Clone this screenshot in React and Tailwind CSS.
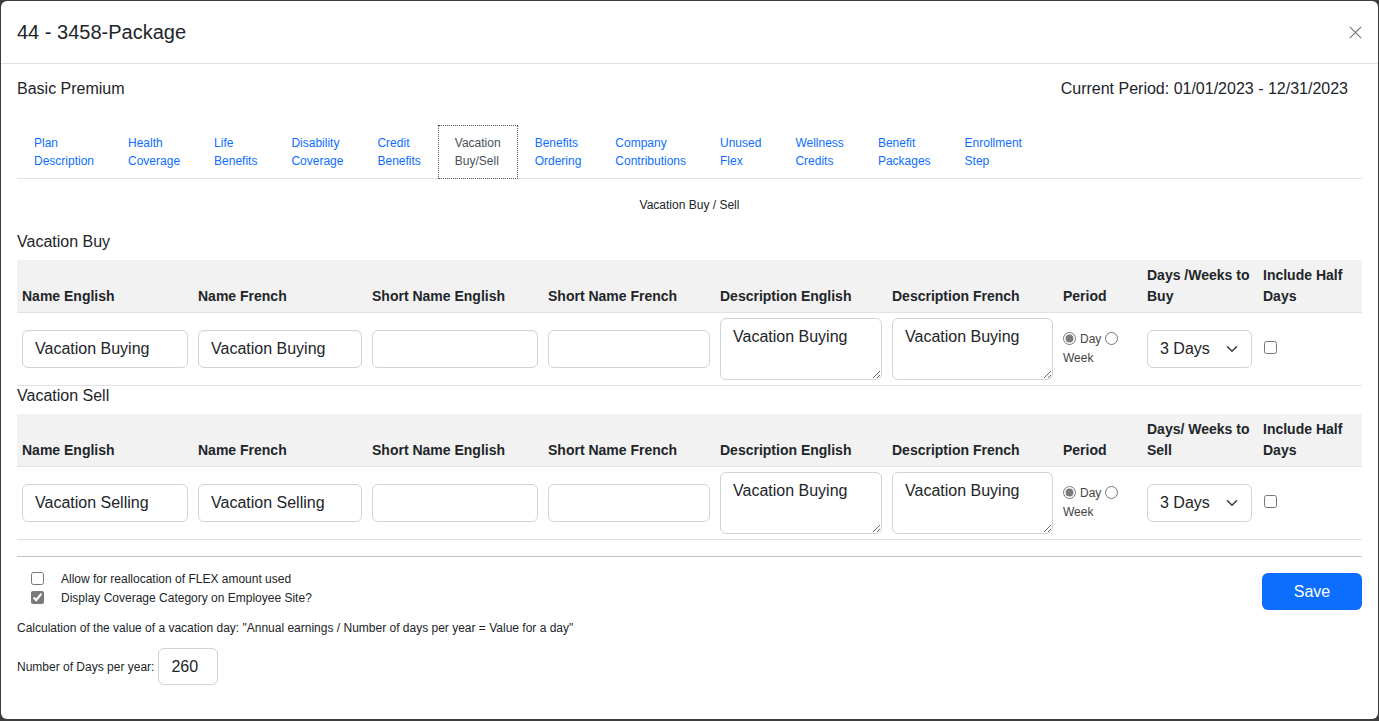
import React from "react";

const tabs = [
  ["Plan", "Description"],
  ["Health", "Coverage"],
  ["Life", "Benefits"],
  ["Disability", "Coverage"],
  ["Credit", "Benefits"],
  ["Vacation", "Buy/Sell"],
  ["Benefits", "Ordering"],
  ["Company", "Contributions"],
  ["Unused", "Flex"],
  ["Wellness", "Credits"],
  ["Benefit", "Packages"],
  ["Enrollment", "Step"],
];

const Chevron = () => (
  <svg width="12" height="12" viewBox="0 0 16 16" className="absolute right-[14px] top-1/2 -translate-y-1/2 pointer-events-none">
    <path d="M2 5l6 6 6-6" fill="none" stroke="#343a40" strokeWidth="2" strokeLinecap="round" strokeLinejoin="round" />
  </svg>
);

const inputCls =
  "w-full h-[38px] border border-[#ced4da] rounded-[6px] px-3 text-base text-[#212529] bg-white outline-none";
const areaCls =
  "block w-full h-[62px] border border-[#ced4da] rounded-[6px] px-3 py-1.5 text-base leading-6 text-[#212529] bg-white outline-none";

const VacationTable = ({ name, desc, daysLabel, group }) => (
  <table className="w-full border-collapse table-fixed">
    <colgroup>
      <col className="w-[176px]" />
      <col className="w-[174px]" />
      <col className="w-[176px]" />
      <col className="w-[172px]" />
      <col className="w-[172px]" />
      <col className="w-[171px]" />
      <col className="w-[84px]" />
      <col className="w-[116px]" />
      <col className="w-[104px]" />
    </colgroup>
    <thead>
      <tr className="bg-[#f2f2f2] border-b border-[#dee2e6]">
        {[
          "Name English",
          "Name French",
          "Short Name English",
          "Short Name French",
          "Description English",
          "Description French",
          "Period",
          daysLabel,
          "Include Half Days",
        ].map((h) => (
          <th key={h} className="text-left align-bottom px-[5px] py-[5px] text-sm leading-[21px] font-bold text-[#212529]">
            {h}
          </th>
        ))}
      </tr>
    </thead>
    <tbody>
      <tr className="border-b border-[#dee2e6]">
        <td className="p-[5px] align-middle">
          <input className={inputCls} defaultValue={name} />
        </td>
        <td className="p-[5px] align-middle">
          <input className={inputCls} defaultValue={name} />
        </td>
        <td className="p-[5px] align-middle">
          <input className={inputCls} />
        </td>
        <td className="p-[5px] align-middle">
          <input className={inputCls} />
        </td>
        <td className="p-[5px] align-middle">
          <textarea className={areaCls} defaultValue={desc} />
        </td>
        <td className="p-[5px] align-middle">
          <textarea className={areaCls} defaultValue={desc} />
        </td>
        <td className="p-[5px] align-middle text-xs leading-[19px] text-[#444]">
          <input type="radio" name={group} defaultChecked className="m-0 mr-1 align-[-2px] accent-[#7a7a7a]" />
          Day
          <input type="radio" name={group} className="m-0 ml-1 align-[-2px] accent-[#7a7a7a]" /> Week
        </td>
        <td className="p-[5px] align-middle">
          <div className="relative w-[105px]">
            <select className="appearance-none w-full h-[38px] border border-[#ced4da] rounded-[6px] pl-3 text-base text-[#212529] bg-white outline-none">
              <option>3 Days</option>
            </select>
            <Chevron />
          </div>
        </td>
        <td className="p-[5px] align-middle">
          <input type="checkbox" className="m-0 ml-px mb-[5px] w-[13px] h-[13px] align-middle" />
        </td>
      </tr>
    </tbody>
  </table>
);

export default function App() {
  return (
    <div className="min-h-screen bg-[#3d3d3d] pt-px pl-px font-['Liberation_Sans',Arial,sans-serif] text-[#212529]">
      <div className="w-[1377px] h-[718px] bg-white rounded-[6px] overflow-hidden">
        {/* header */}
        <div className="flex items-center justify-between px-4 h-[63px] border-b border-[#dee2e6]">
          <h1 className="text-xl leading-[30px]">44 - 3458-Package</h1>
          <svg width="13" height="13" viewBox="0 0 16 16">
            <path d="M1 1l14 14M15 1L1 15" stroke="#6c757d" strokeWidth="1.4" />
          </svg>
        </div>

        <div className="px-4">
          <div className="flex justify-between pt-[13px] text-base leading-6">
            <span>Basic Premium</span>
            <span className="pr-[14px]">Current Period: 01/01/2023 - 12/31/2023</span>
          </div>

          {/* tabs */}
          <div className="flex mt-6 border-b border-[#dee2e6]">
            {tabs.map(([a, b]) => {
              const active = a === "Vacation";
              return (
                <div
                  key={a + b}
                  className={
                    "px-4 py-2 text-xs leading-[18px] border -mb-px " +
                    (active
                      ? "border-dotted border-[#555] text-[#495057] bg-white"
                      : "border-transparent text-[#0d6efd]")
                  }
                >
                  <div>{a}</div>
                  <div>{b}</div>
                </div>
              );
            })}
          </div>

          <div className="mt-[17px] text-center text-xs leading-[18px]">Vacation Buy / Sell</div>

          <div className="mt-4 text-base leading-6">Vacation Buy</div>
          <div className="mt-[6px]">
            <VacationTable name="Vacation Buying" desc="Vacation Buying" daysLabel="Days /Weeks to Buy" group="buy" />
          </div>

          <div className="text-base leading-5">Vacation Sell</div>
          <div className="mt-2">
            <VacationTable name="Vacation Selling" desc="Vacation Buying" daysLabel="Days/ Weeks to Sell" group="sell" />
          </div>

          <div className="mt-4 border-t border-[#c4c4c4]" />

          <div className="flex justify-between items-start mt-3">
            <div className="text-xs">
              <label className="flex items-center h-[19px]">
                <input type="checkbox" className="m-0 ml-[14px] w-[13px] h-[13px]" />
                <span className="ml-[17px]">Allow for reallocation of FLEX amount used</span>
              </label>
              <label className="flex items-center h-[19px]">
                <input type="checkbox" defaultChecked className="m-0 ml-[14px] w-[13px] h-[13px] accent-[#7a7a7a]" />
                <span className="ml-[17px]">Display Coverage Category on Employee Site?</span>
              </label>
            </div>
            <button className="mt-1 w-[100px] h-[37px] rounded-[6px] bg-[#0d6efd] text-white text-base">Save</button>
          </div>

          <div className="mt-[9px] text-xs leading-[18px]">
            Calculation of the value of a vacation day: "Annual earnings / Number of days per year = Value for a day"
          </div>

          <div className="flex items-center gap-1 mt-[11px]">
            <span className="text-xs">Number of Days per year:</span>
            <input className="w-[60px] h-[37px] border border-[#ced4da] rounded-[6px] px-3 text-base outline-none" defaultValue="260" />
          </div>
        </div>
      </div>
    </div>
  );
}
